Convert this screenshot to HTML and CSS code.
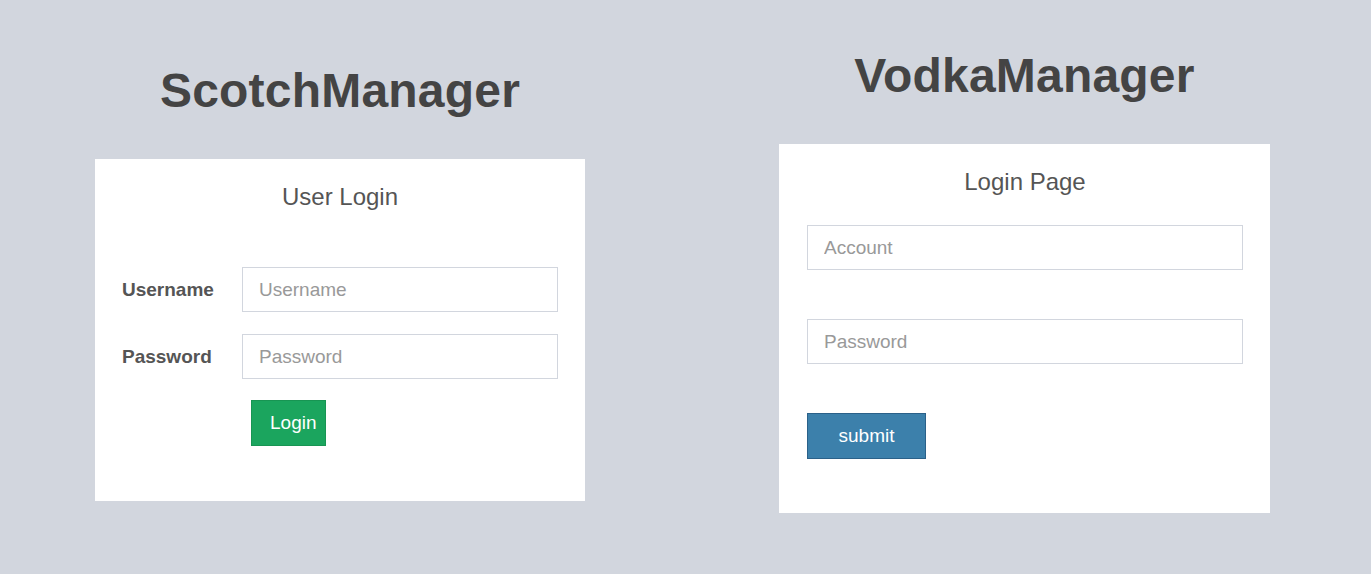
FILE: index.html
```html
<!DOCTYPE html>
<html lang="en">
<head>
<meta charset="utf-8">
<title>Managers</title>
<link rel="stylesheet" href="styles.css">
</head>
<body>
<main class="page">
  <section class="panel panel-scotch">
    <h1 class="brand">ScotchManager</h1>
    <div class="card card-scotch">
      <h2 class="card-title">User Login</h2>
      <form class="form-horizontal">
        <div class="form-row">
          <label class="form-label" for="u">Username</label>
          <input class="form-input" id="u" type="text" placeholder="Username">
        </div>
        <div class="form-row">
          <label class="form-label" for="p">Password</label>
          <input class="form-input" id="p" type="password" placeholder="Password">
        </div>
        <div class="form-actions">
          <button class="btn btn-green" type="button">Login</button>
        </div>
      </form>
    </div>
  </section>
  <section class="panel panel-vodka">
    <h1 class="brand">VodkaManager</h1>
    <div class="card card-vodka">
      <h2 class="card-title">Login Page</h2>
      <form class="form-stacked">
        <input class="form-input" type="text" placeholder="Account">
        <input class="form-input" type="password" placeholder="Password">
        <div class="form-actions-stacked">
          <button class="btn btn-blue" type="button">submit</button>
        </div>
      </form>
    </div>
  </section>
</main>
</body>
</html>
```

FILE: styles.css
```css
html, body {
  margin: 0;
  padding: 0;
  background: #d2d6de;
  font-family: "Liberation Sans", Arial, Helvetica, sans-serif;
  color: #555;
}

.page {
  display: flex;
  align-items: flex-start;
  padding-left: 95px;
  gap: 194px;
}

.panel {
  width: 490px;
  flex: 0 0 490px;
}

.panel-scotch {
  padding-top: 63px;
}

.panel-vodka {
  width: 491px;
  flex: 0 0 491px;
  padding-top: 48px;
}

.brand {
  margin: 0 0 40px;
  font-size: 48px;
  line-height: 56px;
  font-weight: 700;
  color: #444;
  text-align: center;
  letter-spacing: 0.2px;
}

.card {
  background: #fff;
  padding: 23px 27px 55px;
}

.card-vodka {
  padding: 23px 27px 54px 28px;
}

.card-title {
  margin: 0;
  font-size: 24px;
  line-height: 30px;
  font-weight: 400;
  color: #555;
  text-align: center;
}

.form-horizontal {
  margin-top: 55px;
  display: flex;
  flex-direction: column;
  gap: 22px;
}

.form-row {
  display: grid;
  grid-template-columns: 120px 1fr;
  align-items: center;
}

.form-label {
  font-size: 19px;
  font-weight: 700;
  color: #555;
}

.form-input {
  box-sizing: border-box;
  display: block;
  width: 100%;
  height: 45px;
  margin: 0;
  padding: 0 16px;
  border: 1px solid #d2d6de;
  border-radius: 0;
  background: #fff;
  font-family: inherit;
  font-size: 19px;
  color: #555;
  outline: none;
}

.form-input::placeholder {
  color: #999;
}

.form-actions {
  margin-top: -1px;
  padding-left: 129px;
}

.btn {
  box-sizing: border-box;
  height: 46px;
  margin: 0;
  border-radius: 0;
  font-family: inherit;
  font-size: 19px;
  color: #fff;
  cursor: pointer;
}

.btn-green {
  width: 75px;
  padding: 0 9px 0 18px;
  background: #1ba55e;
  border: 1px solid #189553;
}

.form-stacked {
  margin-top: 28px;
  display: flex;
  flex-direction: column;
  gap: 49px;
}

.btn-blue {
  width: 119px;
  padding: 0;
  background: #3c80ab;
  border: 1px solid #2b6189;
}
```
